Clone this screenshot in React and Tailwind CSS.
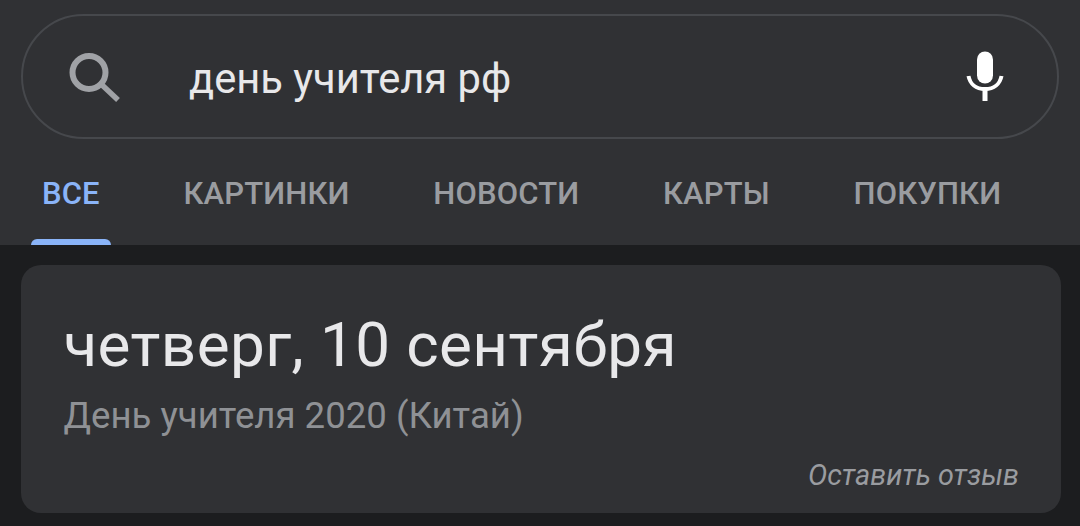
const tabs = [
  { label: 'ВСЕ', active: true },
  { label: 'КАРТИНКИ' },
  { label: 'НОВОСТИ' },
  { label: 'КАРТЫ' },
  { label: 'ПОКУПКИ' },
]

function SearchIcon() {
  return (
    <svg width="52" height="52" viewBox="0 0 52 52" fill="none" className="shrink-0">
      <circle cx="20" cy="21.5" r="16.5" stroke="#a0a2a6" strokeWidth="6" />
      <path d="M32 33 L49 49" stroke="#a0a2a6" strokeWidth="5.5" />
    </svg>
  )
}

function MicIcon() {
  return (
    <svg width="40" height="52" viewBox="0 0 40 52" fill="none" className="shrink-0">
      <rect x="12" y="0.5" width="16" height="32" rx="8" fill="#ffffff" />
      <path d="M3.5 25 C5 33 11 38 20 38 C29 38 35 33 36.5 25" stroke="#ffffff" strokeWidth="4" />
      <path d="M20 38 V50" stroke="#ffffff" strokeWidth="5" />
    </svg>
  )
}

export default function App() {
  return (
    <div className="w-[1080px] h-[526px] overflow-hidden bg-[#1c1d1f] font-['Roboto',sans-serif]">
      {/* Header */}
      <div className="h-[245px] bg-[#303134] px-[21px] pt-[14px]">
        <div className="w-[1038px] h-[125px] flex items-center rounded-full border-2 border-[#46484c] pl-[46px] pr-[52px]">
          <SearchIcon />
          <span className="ml-[68px] flex-1 pt-[4px] text-[41.7px] leading-none text-[#e8e8ea]">день учителя рф</span>
          <MicIcon />
        </div>
        <div className="flex h-[106px] -ml-[21px]">
          {tabs.map((t) => (
            <div
              key={t.label}
              className="relative pl-[42px] pr-[41.7px] pt-[37px] text-[31px] leading-[36px] font-medium tracking-[0.15px]"
            >
              <span className={t.active ? 'text-[#8ab4f8]' : 'text-[#9a9ca0]'}>{t.label}</span>
              {t.active && (
                <div className="absolute left-[31px] right-[30.5px] bottom-0 h-[6px] rounded-t-[6px] bg-[#8ab4f8]" />
              )}
            </div>
          ))}
        </div>
      </div>

      {/* Card */}
      <div className="ml-[21px] mt-[20px] w-[1040px] h-[248px] rounded-[20px] bg-[#303134] pl-[42.5px] pr-[42px] pt-[47px]">
        <div className="text-[62px] leading-[66px] text-[#e8e8ea] tracking-[0.4px]">четверг, 10 сентября</div>
        <div className="mt-[17px] text-[36.6px] leading-[42px] text-[#8f9195]">День учителя 2020 (Китай)</div>
        <div className="mt-[22px] text-right text-[28.8px] leading-[32px] italic text-[#9a9ca0]">Оставить отзыв</div>
      </div>
    </div>
  )
}
